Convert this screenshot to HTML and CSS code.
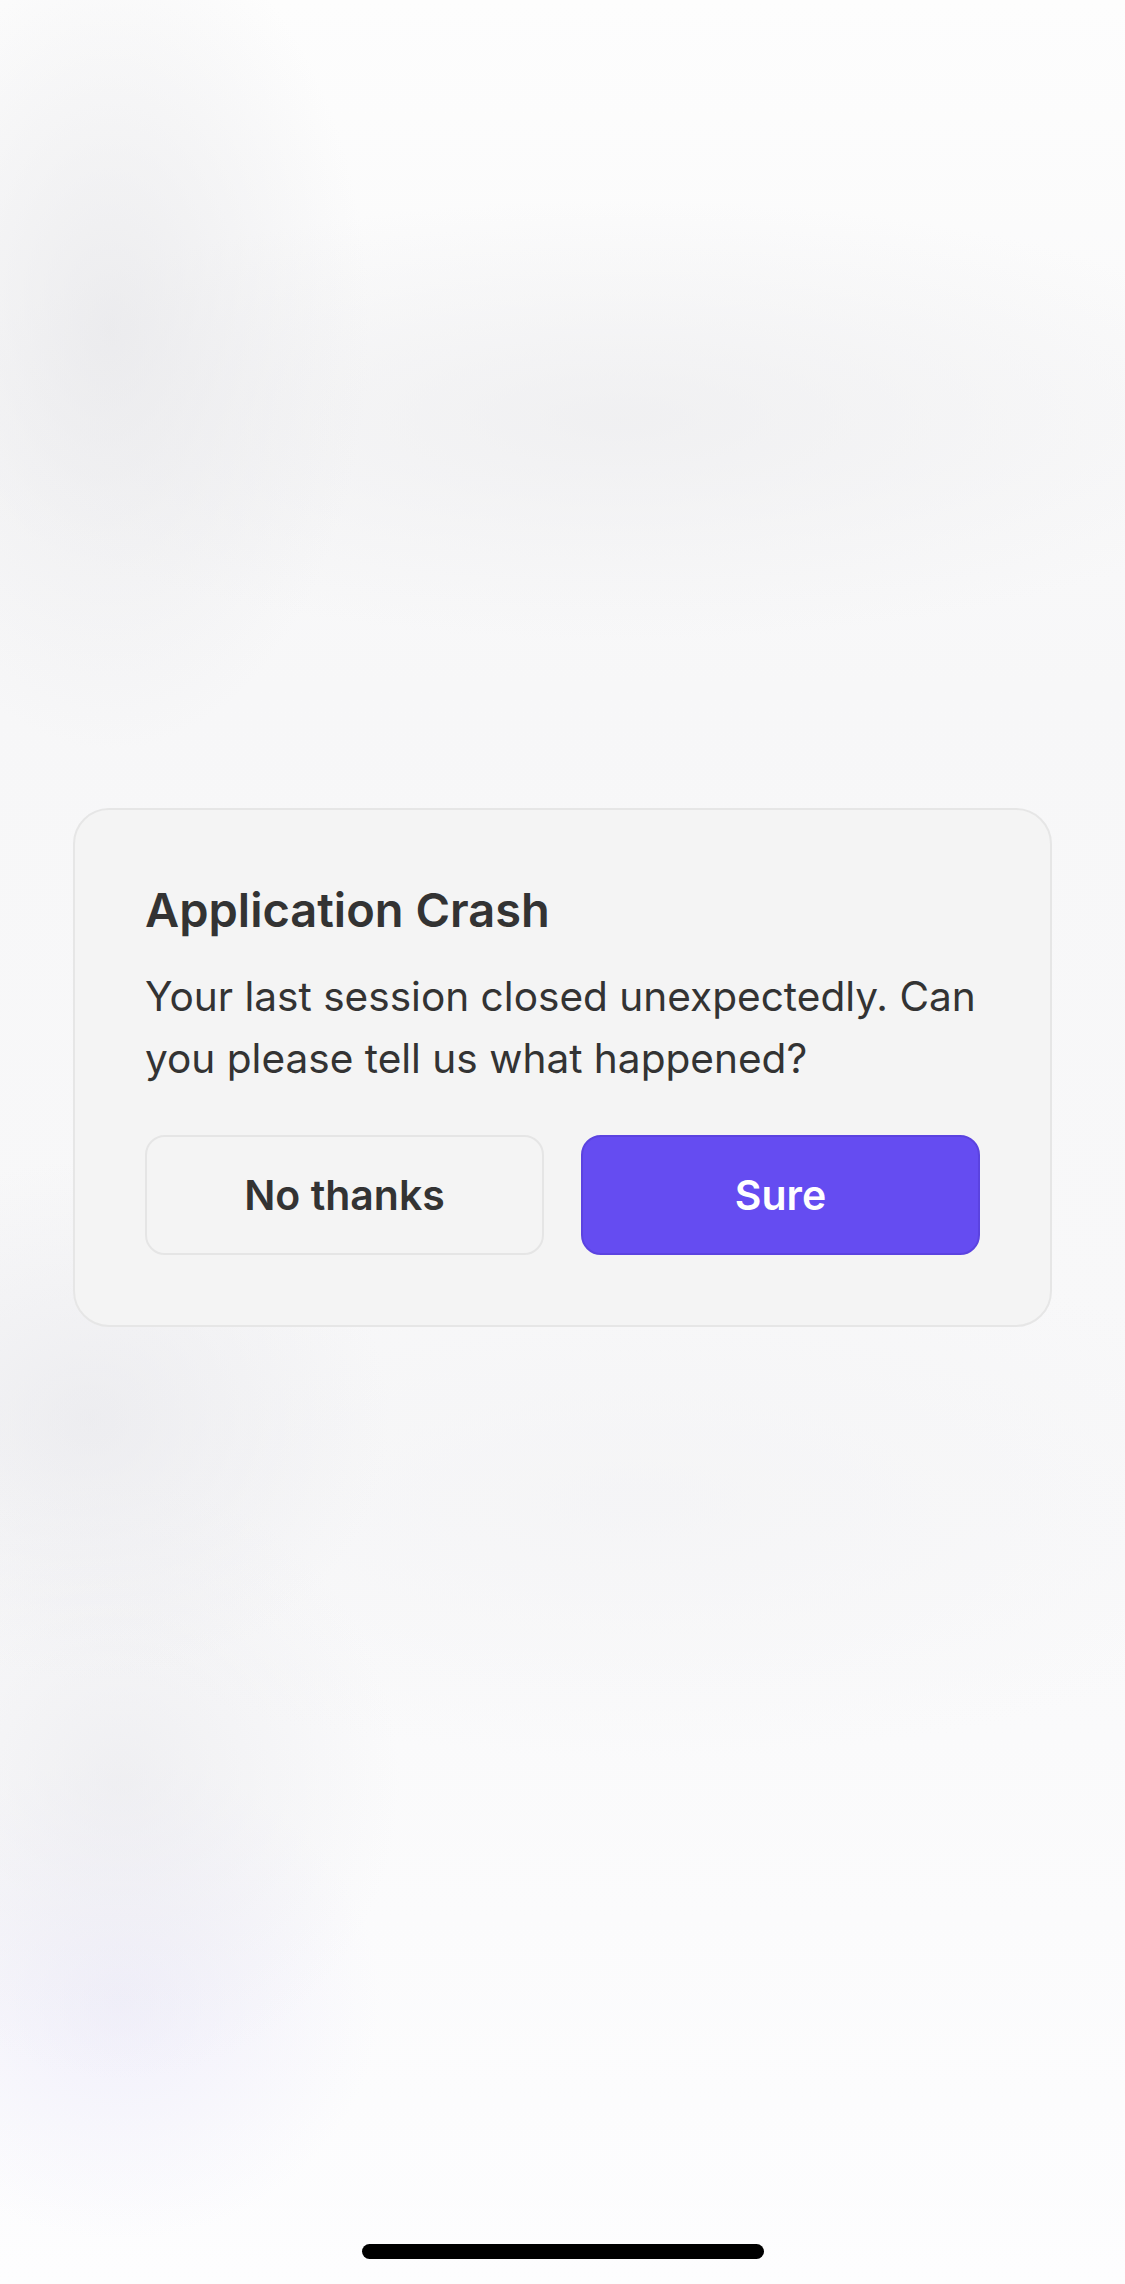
FILE: index.html
```html
<!DOCTYPE html>
<html lang="en">
<head>
    <meta charset="UTF-8">
    <meta name="viewport" content="width=device-width, initial-scale=1.0">
    <title>Application Crash</title>
    <link rel="stylesheet" href="styles.css">
</head>
<body>
    <div class="screen">
        <div class="dialog">
            <h2 class="dialog-title">Application Crash</h2>
            <p class="dialog-text">Your last session closed unexpectedly. Can you please tell us what happened?</p>
            <div class="dialog-actions">
                <button type="button" class="btn btn-secondary">No thanks</button>
                <button type="button" class="btn btn-primary">Sure</button>
            </div>
        </div>
        <div class="home-indicator"></div>
    </div>
</body>
</html>
```

FILE: styles.css
```css
* {
    box-sizing: border-box;
}

body {
    margin: 0;
    font-family: Inter, "Noto Sans", Arial, sans-serif;
    color: #333333;
    background-color: #fbfbfc;
}

.screen {
    display: flex;
    flex-direction: column;
    align-items: center;
    height: 2284px;
    padding-top: 808px;
    background:
        radial-gradient(ellipse 260px 420px at 110px 330px, rgba(230, 230, 233, 0.7), transparent),
        radial-gradient(ellipse 300px 260px at 90px 1420px, rgba(232, 232, 236, 0.7), transparent),
        radial-gradient(ellipse 280px 300px at 120px 1780px, rgba(232, 232, 236, 0.6), transparent),
        radial-gradient(ellipse 260px 240px at 120px 2000px, rgba(236, 234, 250, 0.7), transparent),
        radial-gradient(ellipse 700px 220px at 620px 420px, rgba(236, 236, 238, 0.7), transparent),
        radial-gradient(ellipse 700px 260px at 640px 1500px, rgba(242, 242, 244, 0.6), transparent),
        linear-gradient(180deg, #fdfdfd 0%, #f7f7f8 30%, #f8f8f9 60%, #fdfdfe 100%);
}

.dialog {
    width: 979px;
    padding: 70px 70px 70px;
    background-color: #f4f4f4;
    border: 2px solid #e6e6e6;
    border-radius: 36px;
}

.dialog-title {
    margin: 0 0 26px;
    font-size: 47px;
    font-weight: 600;
    line-height: 60px;
    color: #333333;
}

.dialog-text {
    margin: 0 -20px 45px 0;
    font-size: 40.6px;
    font-weight: 400;
    line-height: 62px;
    color: #333333;
}

.dialog-actions {
    display: flex;
    gap: 37px;
}

.btn {
    flex: 1;
    height: 120px;
    border-radius: 20px;
    font-family: inherit;
    font-size: 41px;
    font-weight: 600;
    cursor: pointer;
}

.btn-secondary {
    background-color: #f4f4f4;
    border: 2px solid #e5e5e5;
    color: #333333;
}

.btn-primary {
    background-color: #654cf1;
    border: 2px solid #5b43e0;
    color: #ffffff;
}

.home-indicator {
    width: 402px;
    height: 15px;
    margin-top: auto;
    margin-bottom: 25px;
    background-color: #000000;
    border-radius: 8px;
}
```
